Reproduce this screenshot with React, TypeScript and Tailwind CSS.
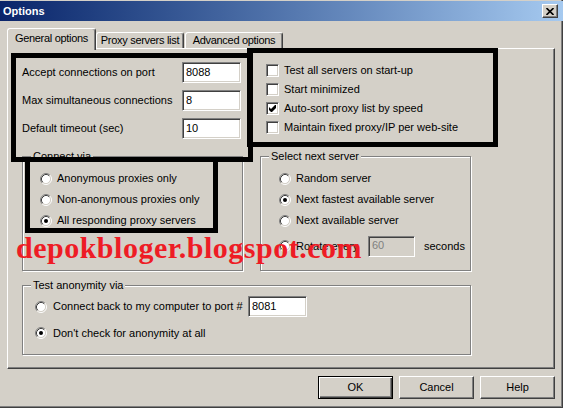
import React from "react";

function Radio({ checked = false }: { checked?: boolean }) {
  return (
    <svg width="12" height="12" viewBox="0 0 12 12" className="block shrink-0">
      <circle cx="6" cy="6" r="4.5" fill="#fff" />
      <path d="M2.11 9.89 A5.5 5.5 0 0 1 9.89 2.11" fill="none" stroke="#808080" strokeWidth="1" />
      <path d="M9.89 2.11 A5.5 5.5 0 0 1 2.11 9.89" fill="none" stroke="#ffffff" strokeWidth="1" />
      <path d="M2.82 9.18 A4.5 4.5 0 0 1 9.18 2.82" fill="none" stroke="#404040" strokeWidth="1" />
      <path d="M9.18 2.82 A4.5 4.5 0 0 1 2.82 9.18" fill="none" stroke="#D4D0C8" strokeWidth="1" />
      {checked && <circle cx="6" cy="6" r="2" fill="#000" />}
    </svg>
  );
}

function Checkbox({ checked = false }: { checked?: boolean }) {
  return (
    <div className="flex h-[13px] w-[13px] shrink-0 items-center justify-center border border-t-[#808080] border-l-[#808080] border-r-white border-b-white bg-white shadow-[inset_1px_1px_0_#404040,inset_-1px_-1px_0_#D4D0C8]">
      {checked && (
        <svg width="7" height="7" viewBox="0 0 7 7" className="block">
          <polygon points="0,2 2,4 6,0 7,0 7,3 3,7 2,7 0,5" fill="#000" />
        </svg>
      )}
    </div>
  );
}

function Field({ value, width, disabled = false }: { value: string; width: string; disabled?: boolean }) {
  return (
    <div
      className={
        "flex h-[21px] shrink-0 items-center border border-t-[#808080] border-l-[#808080] border-r-white border-b-white pl-[3px] pb-[1px] shadow-[inset_1px_1px_0_#404040,inset_-1px_-1px_0_#D4D0C8] " +
        width +
        (disabled ? " bg-[#D4D0C8] text-[#808080]" : " bg-white text-black")
      }
    >
      {value}
    </div>
  );
}

function Group({ label, className, children }: { label: string; className: string; children: React.ReactNode }) {
  return (
    <div className={"relative border border-[#808080] shadow-[1px_1px_0_#fff,inset_1px_1px_0_#fff] " + className}>
      <span className="absolute -top-[7px] left-[8px] bg-[#D4D0C8] px-[2px] leading-[13px]">{label}</span>
      {children}
    </div>
  );
}

function Button({ label, isDefault = false }: { label: string; isDefault?: boolean }) {
  return (
    <div
      className={
        "flex h-[23px] w-[75px] items-center justify-center bg-[#D4D0C8] " +
        (isDefault
          ? "border border-black shadow-[inset_1px_1px_0_#fff,inset_-1px_-1px_0_#404040,inset_-2px_-2px_0_#808080]"
          : "border border-t-white border-l-white border-r-[#404040] border-b-[#404040] shadow-[inset_-1px_-1px_0_#808080]")
      }
    >
      {label}
    </div>
  );
}

export default function App() {
  const fields: [string, string][] = [
    ["Accept connections on port", "8088"],
    ["Max simultaneous connections", "8"],
    ["Default timeout (sec)", "10"],
  ];
  const checks: [string, boolean][] = [
    ["Test all servers on start-up", false],
    ["Start minimized", false],
    ["Auto-sort proxy list by speed", true],
    ["Maintain fixed proxy/IP per web-site", false],
  ];

  return (
    <div className="relative h-[408px] w-[563px] overflow-hidden whitespace-nowrap bg-[#D4D0C8] font-['Liberation_Sans',Arial,sans-serif] text-[11px] leading-[13px] text-black shadow-[inset_-1px_-1px_0_#404040,inset_-2px_-2px_0_#808080]">
      {/* Title bar */}
      <div className="pt-[1px]">
        <div className="flex h-[20px] items-center justify-between bg-gradient-to-r from-[#0A246A] to-[#A6CAF0] pl-[3px] pr-[5px]">
          <span className="font-bold text-white">Options</span>
          <div className="flex h-[14px] w-[16px] items-center justify-center border border-t-white border-l-white border-r-[#404040] border-b-[#404040] bg-[#D4D0C8] shadow-[inset_-1px_-1px_0_#808080]">
            <svg width="8" height="7" viewBox="0 0 8 7" className="block">
              <path d="M0.5 0 L7.5 7 M7.5 0 L0.5 7" stroke="#000" strokeWidth="1.6" />
            </svg>
          </div>
        </div>
      </div>

      {/* Tabs */}
      <div className="relative z-10 ml-[7px] mt-[7px] flex h-[20px] items-end">
        <div className="-mb-[2px] flex h-[22px] w-[89px] justify-center rounded-t-[3px] border-l border-t border-r border-l-white border-t-white border-r-[#404040] bg-[#D4D0C8] pt-[3px] tracking-[-0.3px] shadow-[inset_-1px_0_0_#808080]">
          General options
        </div>
        <div className="flex h-[16px] w-[88px] justify-center rounded-t-[3px] border-l border-t border-r border-l-white border-t-white border-r-[#404040] bg-[#D4D0C8] pt-[1px] tracking-[-0.3px] shadow-[inset_-1px_0_0_#808080]">
          Proxy servers list
        </div>
        <div className="ml-[1px] flex h-[16px] w-[98px] justify-center rounded-t-[3px] border-l border-t border-r border-l-white border-t-white border-r-[#404040] bg-[#D4D0C8] pt-[1px] tracking-[-0.3px] shadow-[inset_-1px_0_0_#808080]">
          Advanced options
        </div>
      </div>

      {/* Panel */}
      <div className="ml-[7px] flex h-[321px] w-[548px] flex-col border border-t-white border-l-white border-r-[#404040] border-b-[#404040] px-[14px] pt-[13px] shadow-[inset_-1px_-1px_0_#808080]">
        <div className="flex">
          <div className="flex flex-col gap-[7px]">
            {fields.map(([label, value]) => (
              <div key={label} className="flex h-[21px] items-center">
                <span className="w-[160px]">{label}</span>
                <Field value={value} width="w-[59px]" />
              </div>
            ))}
          </div>
          <div className="-mt-[1px] ml-[25px] flex flex-col">
            {checks.map(([label, checked]) => (
              <div key={label} className="flex h-[19px] items-center gap-[5px]">
                <Checkbox checked={checked} />
                <span>{label}</span>
              </div>
            ))}
          </div>
        </div>

        <div className="mt-[17px] flex gap-[17px]">
          <Group label="Connect via" className="h-[115px] w-[221px] pl-[17px] pt-[11px]">
            {[
              ["Anonymous proxies only", false],
              ["Non-anonymous proxies only", false],
              ["All responding proxy servers", true],
            ].map(([label, checked]) => (
              <div key={label as string} className="flex h-[21px] items-center gap-[5px]">
                <Radio checked={checked as boolean} />
                <span>{label as string}</span>
              </div>
            ))}
          </Group>
          <Group label="Select next server" className="h-[115px] w-[211px] pl-[18px] pt-[11px]">
            {[
              ["Random server", false],
              ["Next fastest available server", true],
              ["Next available server", false],
            ].map(([label, checked]) => (
              <div key={label as string} className="flex h-[21px] items-center gap-[5px]">
                <Radio checked={checked as boolean} />
                <span>{label as string}</span>
              </div>
            ))}
            <div className="mt-[4px] flex h-[22px] items-center gap-[5px]">
              <Radio />
              <span className="w-[67px]">Rotate every</span>
              <Field value="60" width="w-[47px]" disabled />
              <span className="ml-[4px]">seconds</span>
            </div>
          </Group>
        </div>

        <Group label="Test anonymity via" className="mt-[14px] h-[70px] w-[449px] pl-[12px] pt-[10px]">
          <div className="flex h-[21px] items-center gap-[6px]">
            <Radio />
            <span className="w-[189px]">Connect back to my computer to port #</span>
            <Field value="8081" width="w-[59px]" />
          </div>
          <div className="mt-[6px] flex h-[20px] items-center gap-[6px]">
            <Radio checked />
            <span>Don't check for anonymity at all</span>
          </div>
        </Group>
      </div>

      {/* Buttons */}
      <div className="mt-[7px] flex justify-end gap-[6px] pr-[8px]">
        <Button label="OK" isDefault />
        <Button label="Cancel" />
        <Button label="Help" />
      </div>

      {/* Annotation overlays */}
      <div className="absolute left-[11px] top-[53px] h-[109px] w-[242px] border-[5px] border-black" />
      <div className="absolute left-[247px] top-[48px] h-[99px] w-[251px] border-[5px] border-black" />
      <div className="absolute left-[25px] top-[157px] h-[76px] w-[193px] border-[5px] border-black" />

      {/* Watermark */}
      <div className="absolute left-[16px] top-[233px] font-['Liberation_Serif','Times_New_Roman',serif] text-[30px] font-bold leading-[30px] tracking-[0.5px] text-[#EE1C25]">
        depokbloger.blogspot.com
      </div>
    </div>
  );
}
